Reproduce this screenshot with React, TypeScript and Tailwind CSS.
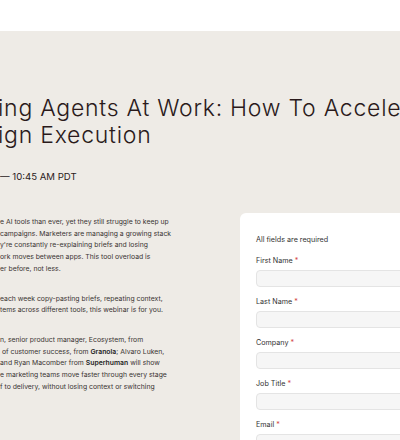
import React from 'react';

const intro = [
  'e AI tools than ever, yet they still struggle to keep up',
  'campaigns. Marketers are managing a growing stack',
  "y're constantly re-explaining briefs and losing",
  'ork moves between apps. This tool overload is',
  'er before, not less.',
];

const audience = [
  'each week copy-pasting briefs, repeating context,',
  'tems across different tools, this webinar is for you.',
];

const fields = ['First Name', 'Last Name', 'Company', 'Job Title', 'Email'];

const Field = ({ label }: { label: string }) => (
  <div className="mt-[10px] first:mt-0">
    <label className="block text-[7.2px] leading-[10px] text-[#333]">
      {label} <span className="text-[#d23b3b]">*</span>
    </label>
    <div className="mt-[4px] h-[17px] w-full rounded-[4px] border border-[#e4e4e4] bg-[#f6f6f6]" />
  </div>
);

const App = () => {
  return (
    <div className="w-[400px] h-[440px] overflow-hidden bg-white font-['Inter',sans-serif]">
      <div className="h-[31px] bg-white" />
      <main className="h-[409px] bg-[#eeebe6] pt-[64px]">
        <h1 className="whitespace-nowrap text-[23px] font-light tracking-[0.75px] leading-[26.5px] text-[#2a1a1b] -ml-[2px]">
          <div>ing Agents At Work: How To Accelerate</div>
          <div>ign Execution</div>
        </h1>
        <p className="mt-[22px] whitespace-nowrap text-[9.6px] leading-[14px] text-[#2a1a1b]">
          — 10:45 AM PDT
        </p>

        <div className="mt-[32px] flex">
          <div className="w-[240px] shrink-0 whitespace-nowrap text-[6.85px] leading-[11.7px] text-[#3a3432]">
            <div>
              {intro.map((l) => (
                <div key={l}>{l}</div>
              ))}
            </div>
            <div className="mt-[18px]">
              {audience.map((l) => (
                <div key={l}>{l}</div>
              ))}
            </div>
            <div className="mt-[18px]">
              <div>n, senior product manager, Ecosystem, from</div>
              <div>
                &nbsp;of customer success, from <b className="font-semibold text-[#222]">Granola</b>; Alvaro Luken,
              </div>
              <div>
                and Ryan Macomber from <b className="font-semibold text-[#222]">Superhuman</b> will show
              </div>
              <div>e marketing teams move faster through every stage</div>
              <div>f to delivery, without losing context or switching</div>
            </div>
          </div>

          <form className="-mt-[3px] w-[300px] shrink-0 rounded-[6px] bg-white px-[16px] pt-[22px] pb-[20px]">
            <p className="text-[7.2px] leading-[10px] text-[#333]">All fields are required</p>
            <div className="mt-[11px]">
              {fields.map((f) => (
                <Field key={f} label={f} />
              ))}
            </div>
          </form>
        </div>
      </main>
    </div>
  );
};

export default App;
